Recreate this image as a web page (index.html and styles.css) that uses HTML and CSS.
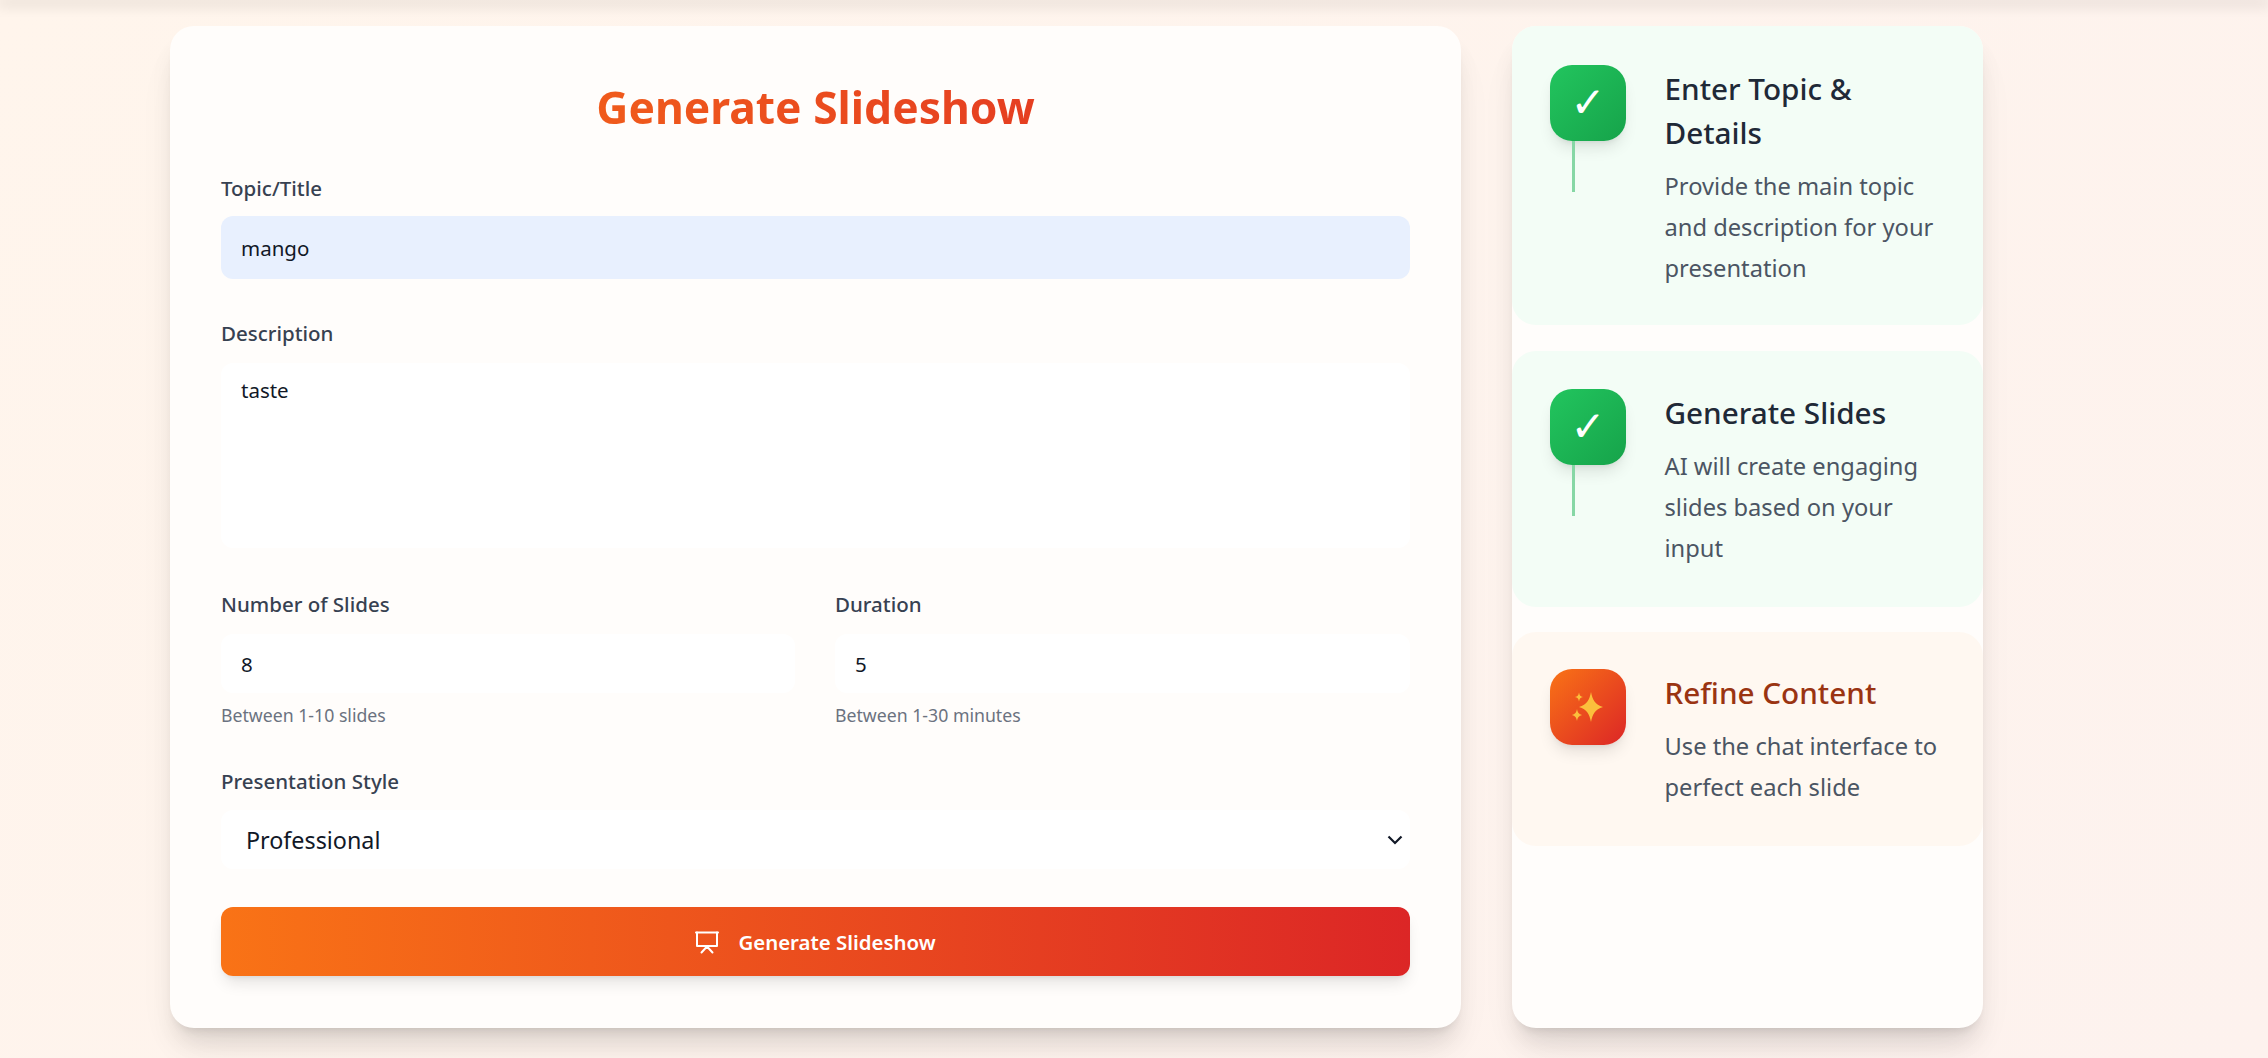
FILE: index.html
```html
<!DOCTYPE html>
<html lang="en">
<head>
<meta charset="utf-8">
<title>Generate Slideshow</title>
<link rel="stylesheet" href="styles.css">
</head>
<body>
<div class="topbar"></div>
<main class="layout">
  <form class="card form-card">
    <h1 class="title">Generate Slideshow</h1>
    <div class="field field-topic">
      <label class="label" for="topic">Topic/Title</label>
      <input class="control control-topic autofilled" id="topic" type="text" value="mango">
    </div>
    <div class="field field-desc">
      <label class="label" for="desc">Description</label>
      <textarea class="control control-area" id="desc">taste</textarea>
    </div>
    <div class="two-col">
      <div class="field">
        <label class="label" for="num">Number of Slides</label>
        <input class="control" id="num" type="text" value="8">
        <p class="hint">Between 1-10 slides</p>
      </div>
      <div class="field">
        <label class="label" for="dur">Duration</label>
        <input class="control" id="dur" type="text" value="5">
        <p class="hint">Between 1-30 minutes</p>
      </div>
    </div>
    <div class="field field-style">
      <label class="label" for="style">Presentation Style</label>
      <div class="select-wrap">
        <select class="control control-select" id="style"><option>Professional</option></select>
        <svg class="chevron" viewBox="0 0 16 10" width="16" height="10" aria-hidden="true"><path d="M1.500 1.500 8 8l6.500-6.500" fill="none" stroke="#111827" stroke-width="2.200"/></svg>
      </div>
    </div>
    <button class="generate" type="button">
      <svg class="generate-icon" viewBox="0 0 24 24" width="24" height="24" fill="none" stroke="#fff" stroke-width="2" stroke-linecap="round" stroke-linejoin="round" aria-hidden="true"><path d="M1 2.500h22"/><path d="M22 2.500V16H2V2.500"/><path d="m6.500 22.500 5.500-6 5.500 6"/></svg>
      <span>Generate Slideshow</span>
    </button>
  </form>
  <aside class="card steps">
    <section class="step step-done step-a">
      <div class="step-rail">
        <div class="step-icon icon-green"><span class="check">✓</span></div>
        <div class="step-line"></div>
      </div>
      <div class="step-text">
        <h2 class="step-title">Enter Topic &amp; Details</h2>
        <p class="step-desc">Provide the main topic and description for your presentation</p>
      </div>
    </section>
    <section class="step step-done step-b">
      <div class="step-rail">
        <div class="step-icon icon-green"><span class="check">✓</span></div>
        <div class="step-line"></div>
      </div>
      <div class="step-text">
        <h2 class="step-title">Generate Slides</h2>
        <p class="step-desc">AI will create engaging slides based on your input</p>
      </div>
    </section>
    <section class="step step-active">
      <div class="step-rail">
        <div class="step-icon icon-orange">
          <svg viewBox="0 0 32 30" width="32" height="30" fill="#fbbf3c" aria-hidden="true"><path d="M19 0C20.500 8 23 12.500 31 15 23 17.500 20.500 22 19 30 17.500 22 15 17.500 7 15 15 12.500 17.500 8 19 0Z"/><path d="M7 0.500C7.600 3.500 8.500 4.400 11 5 8.500 5.600 7.600 6.500 7 9.500 6.400 6.500 5.500 5.600 3 5 5.500 4.400 6.400 3.500 7 0.500Z"/><path d="M5 17C5.700 20.600 6.700 22 10 23 6.700 24 5.700 25.400 5 29 4.300 25.400 3.300 24 0 23 3.300 22 4.300 20.600 5 17Z"/></svg>
        </div>
      </div>
      <div class="step-text">
        <h2 class="step-title">Refine Content</h2>
        <p class="step-desc">Use the chat interface to perfect each slide</p>
      </div>
    </section>
  </aside>
</main>
</body>
</html>
```
FILE: styles.css
```css
* { box-sizing: border-box; }
html, body { margin: 0; height: 100%; }
body {
  background: linear-gradient(135deg, #fff5ec, #fdf2ee);
  font-family: "Noto Sans", "Open Sans", sans-serif;
  overflow: hidden;
}
.topbar {
  height: 0;
  box-shadow: 0 2px 14px 3px rgba(0, 0, 0, .14);
}
.layout {
  display: grid;
  grid-template-columns: 1291px 471px;
  column-gap: 51px;
  padding: 26px 0 30px 170px;
}
.card {
  background: #fffdfb;
  border-radius: 24px;
  box-shadow: 0 20px 25px -5px rgba(0, 0, 0, .1), 0 8px 10px -6px rgba(0, 0, 0, .1), 0 25px 50px -12px rgba(0, 0, 0, .06);
}
.form-card {
  padding: 49px 51px 52px;
  height: 1002px;
}
.title {
  margin: 0;
  font-size: 44.400px;
  line-height: 64px;
  font-weight: 700;
  text-align: center;
  background: linear-gradient(90deg, #f97316, #dc2626);
  -webkit-background-clip: text;
  background-clip: text;
  color: transparent;
}
.field { display: flex; flex-direction: column; }
.field-topic { margin-top: 35px; }
.field-desc { margin-top: 40px; }
.field-style { margin-top: 40px; }
.label {
  font-size: 20.500px;
  line-height: 28px;
  font-weight: 500;
  color: #374151;
  margin-bottom: 16px;
}
.field-topic .label { margin-bottom: 14px; }
.control {
  display: block;
  width: 100%;
  height: 59px;
  padding: 0 20px;
  border: 0;
  border-radius: 12px;
  background: #fff;
  font-family: inherit;
  font-size: 20.500px;
  color: #111827;
  outline: 0;
}
.control-topic { height: 63px; }
.autofilled { background: #e8f0fe; }
.control-area {
  height: 185px;
  padding-top: 13px;
  line-height: 28px;
  resize: none;
}
.two-col {
  display: grid;
  grid-template-columns: 574px 575px;
  column-gap: 40px;
  margin-top: 42px;
}
.hint {
  margin: 10px 0 0;
  font-size: 17.700px;
  line-height: 24px;
  color: #6b7280;
}
.select-wrap { position: relative; }
.field-style .label { margin-bottom: 15px; }
.control-select {
  appearance: none;
  -webkit-appearance: none;
  padding-left: 25px;
  font-size: 23.300px;
}
.chevron { position: absolute; right: 7px; top: 25px; }
.generate {
  display: flex;
  align-items: center;
  justify-content: center;
  gap: 19px;
  width: 100%;
  height: 69px;
  margin-top: 38px;
  border: 0;
  border-radius: 12px;
  background: linear-gradient(90deg, #f97316, #dc2626);
  box-shadow: 0 10px 15px -3px rgba(0, 0, 0, .1), 0 4px 6px -4px rgba(0, 0, 0, .1);
  font-family: inherit;
  font-size: 20.400px;
  font-weight: 600;
  color: #fff;
}
.generate-icon { flex: none; }
.steps {
  display: flex;
  flex-direction: column;
  gap: 25.500px;
}
.step {
  display: flex;
  gap: 38.500px;
  padding: 38px;
  border-radius: 24px;
}
.step-done { background: #f3fdf6; }
.step-active { background: #fff8f1; padding-top: 37px; padding-bottom: 38px; }
.step-a { padding-top: 39px; padding-bottom: 36px; }
.step-b { padding-bottom: 38px; }
.step-rail {
  position: relative;
  flex: none;
  width: 76px;
}
.step-icon {
  display: flex;
  align-items: center;
  justify-content: center;
  width: 76px;
  height: 76px;
  border-radius: 22px;
  box-shadow: 0 10px 15px -3px rgba(0, 0, 0, .1), 0 4px 6px -4px rgba(0, 0, 0, .1);
}
.icon-green { background: linear-gradient(135deg, #22c55e, #16a34a); }
.icon-orange { background: linear-gradient(135deg, #f97316, #dc2626); }
.check {
  font-family: "DejaVu Sans", sans-serif;
  font-size: 42px;
  line-height: 1;
  color: #fff;
}
.step-line {
  position: absolute;
  left: 22px;
  top: 76px;
  width: 3px;
  height: 51px;
  background: #86d7a5;
}
.step-text { padding-top: 2px; min-width: 0; }
.step-title {
  margin: 0;
  font-size: 29.700px;
  line-height: 44px;
  font-weight: 500;
  color: #1f2937;
}
.step-active .step-title { color: #9a3412; }
.step-desc {
  margin: 11px 0 0;
  font-size: 23.700px;
  line-height: 41px;
  color: #4b5563;
}
```
